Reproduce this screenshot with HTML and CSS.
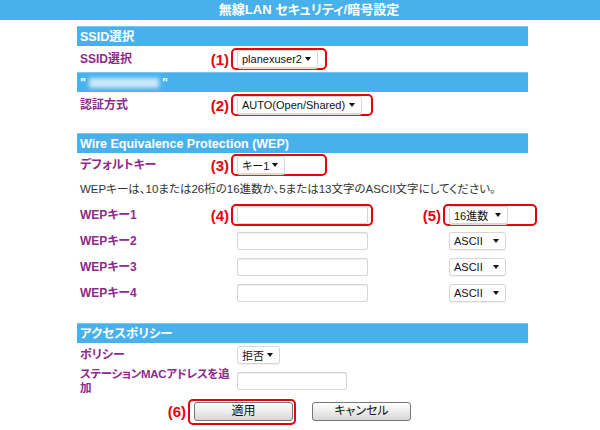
FILE: index.html
```html
<!DOCTYPE html>
<html lang="ja">
<head>
    <meta charset="UTF-8">
    <meta name="viewport" content="width=device-width, initial-scale=1.0">
    <link rel="stylesheet" href="styles.css">
</head>
<body>
<!-- タイトルバー -->
<div class="title-bar">無線LAN セキュリティ/暗号設定</div>

<div class="panel">
    <!-- SSID選択 -->
    <div class="section-head">SSID選択</div>
    <div class="row">
        <div class="label">SSID選択</div>
        <div class="cell">
            <span class="mark w96"><span class="num">(1)</span><span class="select w81">planexuser2</span></span>
        </div>
    </div>

    <div class="section-head">"<span class="blurred"></span>"</div>
    <div class="row">
        <div class="label">認証方式</div>
        <div class="cell">
            <span class="mark w142"><span class="num">(2)</span><span class="select w125">AUTO(Open/Shared)</span></span>
        </div>
    </div>

    <!-- WEP -->
    <div class="section-head gap-top">Wire Equivalence Protection (WEP)</div>
    <div class="row short">
        <div class="label">デフォルトキー</div>
        <div class="cell">
            <span class="mark w96"><span class="num">(3)</span><span class="select w48">キー1</span></span>
        </div>
    </div>
    <p class="note">WEPキーは、10または26桁の16進数か、5または13文字のASCII文字にしてください。</p>

    <div class="row key-row">
        <div class="label">WEPキー1</div>
        <div class="cell">
            <span class="mark w142"><span class="num">(4)</span><span class="input w131"></span></span>
        </div>
        <div class="cell">
            <span class="mark w94"><span class="num">(5)</span><span class="select w59">16進数</span></span>
        </div>
    </div>
    <div class="row key-row">
        <div class="label">WEPキー2</div>
        <div class="cell"><span class="input w131 plain"></span></div>
        <div class="cell"><span class="select w57 plain">ASCII</span></div>
    </div>
    <div class="row key-row">
        <div class="label">WEPキー3</div>
        <div class="cell"><span class="input w131 plain"></span></div>
        <div class="cell"><span class="select w57 plain">ASCII</span></div>
    </div>
    <div class="row key-row">
        <div class="label">WEPキー4</div>
        <div class="cell"><span class="input w131 plain"></span></div>
        <div class="cell"><span class="select w57 plain">ASCII</span></div>
    </div>

    <!-- アクセスポリシー -->
    <div class="section-head gap-top2">アクセスポリシー</div>
    <div class="row short">
        <div class="label">ポリシー</div>
        <div class="cell"><span class="select w43 plain">拒否</span></div>
    </div>
    <div class="row tall">
        <div class="label wide">ステーションMACアドレスを追加</div>
        <div class="cell"><span class="input w110 plain"></span></div>
    </div>

    <div class="buttons">
        <span class="mark btn-mark"><span class="num">(6)</span><span class="button">適用</span></span>
        <span class="button">キャンセル</span>
    </div>
</div>
</body>
</html>
```

FILE: styles.css
```css
body {
    margin: 0;
    font-family: "Liberation Sans", "Noto Sans CJK JP", sans-serif;
    font-feature-settings: "palt";
    font-size: 12px;
    color: #222;
    background: #fff;
}

/* タイトル */
.title-bar {
    height: 20px;
    line-height: 20px;
    padding-left: 18px;
    background: #48b1ec;
    color: #fff;
    font-weight: bold;
    font-size: 13px;
    text-align: center;
}

.panel {
    width: 451px;
    margin: 6px 0 0 77px;
}

.section-head {
    height: 20px;
    line-height: 20px;
    padding-left: 3px;
    background: #48b1ec;
    border-top: 1px solid #7cc7f2;
    box-sizing: border-box;
    color: #fff;
    font-weight: bold;
    font-size: 12.5px;
}

.gap-top { margin-top: 15px; }
.gap-top2 { margin-top: 17px; }

.blurred {
    display: inline-block;
    width: 70px;
    height: 10px;
    margin: 0 3px;
    vertical-align: -1px;
    background: #cde9fa;
    filter: blur(2px);
}

/* 行 */
.row {
    display: grid;
    grid-template-columns: 154px 1fr;
    align-items: center;
    height: 26px;
}
.row.short { height: 24px; }
.row.tall { height: 28px; }
.key-row { grid-template-columns: 154px 212px 1fr; }

.label {
    padding-left: 3px;
    color: #8e2a8e;
    font-weight: bold;
    line-height: 14px;
}
.label.wide {
    margin-right: -6px;
    font-size: 11.5px;
    letter-spacing: -0.3px;
}

.cell {
    display: flex;
    align-items: center;
}

.note {
    margin: 0;
    height: 25px;
    line-height: 25px;
    padding-left: 3px;
    font-size: 11.5px;
    color: #333;
}

/* 赤枠の注記 */
.mark {
    position: relative;
    display: inline-flex;
    align-items: center;
    box-sizing: border-box;
    border: 2px solid #e8000b;
    border-radius: 5px;
    padding-left: 4px;
}
.num {
    position: absolute;
    right: calc(100% + 4px);
    color: #e8000b;
    font-weight: bold;
    font-size: 15px;
    white-space: nowrap;
}

.w96 { width: 96px; }
.w142 { width: 142px; }
.w94 { width: 94px; }
.w81 { width: 81px; }
.w125 { width: 125px; }
.w48 { width: 48px; }
.w59 { width: 59px; }
.w57 { width: 57px; }
.w43 { width: 43px; }
.w131 { width: 131px; }
.w110 { width: 110px; }

.plain { margin-left: 6px; }

/* セレクト風 */
.select {
    display: inline-flex;
    flex-shrink: 0;
    align-items: center;
    justify-content: space-between;
    box-sizing: border-box;
    height: 18px;
    padding: 0 6px 0 4px;
    border: 1px solid #d6d6d6;
    border-radius: 3px;
    background: #fff;
    box-shadow: 0 1px 1px #f0f0f0;
    color: #111;
    font-size: 11px;
    white-space: nowrap;
}
.select::after {
    content: "";
    border-left: 3.5px solid transparent;
    border-right: 3.5px solid transparent;
    border-top: 4px solid #111;
}

.input {
    display: inline-block;
    flex-shrink: 0;
    box-sizing: border-box;
    height: 18px;
    border: 1px solid #d6d6d6;
    border-radius: 2px;
    background: #fff;
    box-shadow: inset 0 1px 1px #eee;
}

/* ボタン */
.buttons {
    display: flex;
    align-items: center;
    gap: 16px;
    height: 33px;
    padding-left: 111px;
}
.btn-mark {
    width: 108px;
    height: 26px;
}
.button {
    display: inline-block;
    box-sizing: border-box;
    width: 99px;
    height: 19px;
    line-height: 17px;
    border: 1px solid #777;
    border-radius: 3px;
    background: linear-gradient(#fefefe, #ececec 50%, #d6d6d6);
    text-align: center;
    color: #111;
    font-size: 12px;
}
```
